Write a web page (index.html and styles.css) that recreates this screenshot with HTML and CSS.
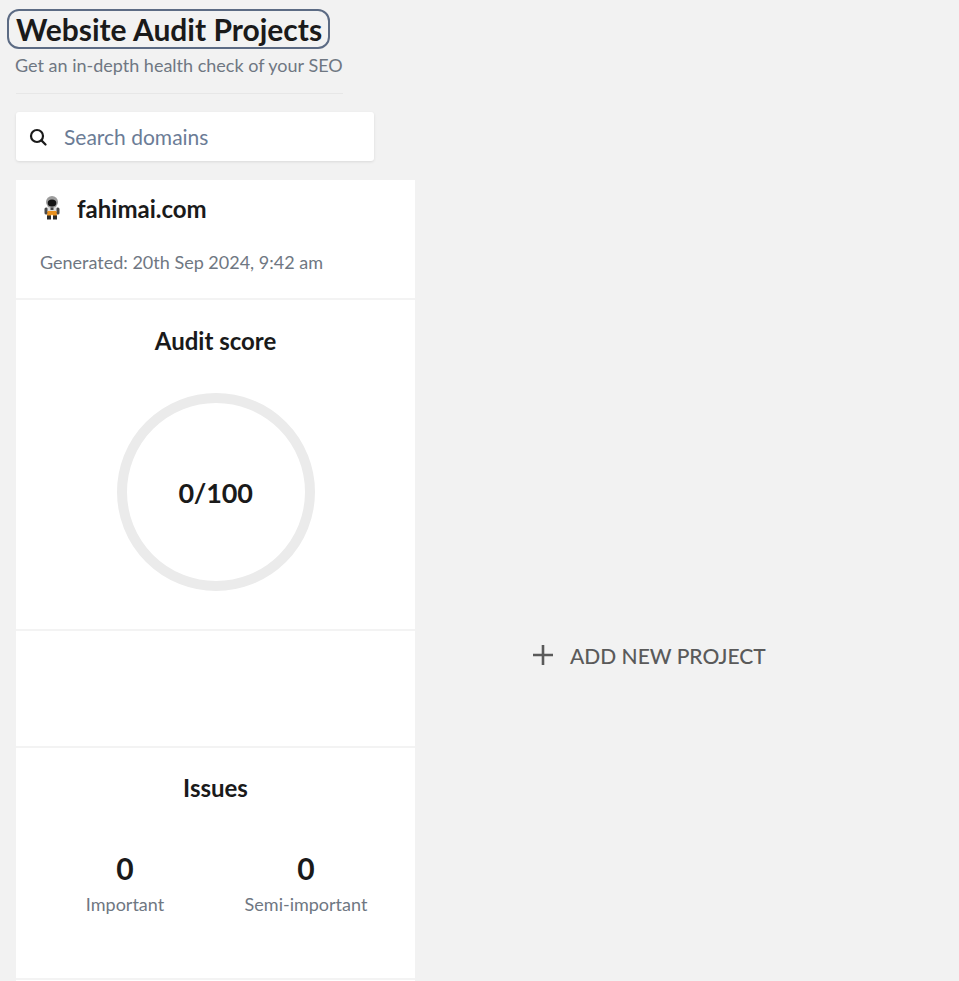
FILE: index.html
```html
<!DOCTYPE html>
<html lang="en">
<head>
<meta charset="utf-8">
<title>Website Audit Projects</title>
<link rel="stylesheet" href="styles.css">
</head>
<body>
<header class="head">
  <h1 class="title">Website Audit Projects</h1>
  <p class="subtitle">Get an in-depth health check of your SEO</p>
</header>
<div class="search">
  <svg class="search-icon" viewBox="0 0 18 18" width="18" height="18" aria-hidden="true"><circle cx="8" cy="8" r="6" fill="none" stroke="#1a1a1a" stroke-width="2.2"/><path d="M12.4 12.4L16.500 16.500" stroke="#1a1a1a" stroke-width="2.2" stroke-linecap="round"/></svg>
  <span class="search-text">Search domains</span>
</div>
<main class="layout">
  <article class="card">
    <section class="sec sec-head">
      <div class="domain">
        <svg class="avatar" viewBox="0 0 18 24" width="18" height="24" aria-hidden="true">
          <rect x="1.500" y="11.500" width="3.500" height="7" rx="1.500" fill="#4a4a4a"/>
          <rect x="13" y="11.500" width="3.500" height="7" rx="1.500" fill="#4a4a4a"/>
          <rect x="4.500" y="10" width="9" height="6" fill="#dcdcdc"/>
          <path d="M4.500 15h9l.5 5h-3.500l-1.500-1.500L7.500 20H4z" fill="#e8901f"/>
          <rect x="4" y="19.500" width="4" height="4" fill="#2b2b2b"/>
          <rect x="10" y="19.500" width="4" height="4" fill="#2b2b2b"/>
          <circle cx="9" cy="6" r="6" fill="#9c9c9c"/>
          <ellipse cx="9" cy="7" rx="4.300" ry="3.500" fill="#141414"/>
          <rect x="7.500" y="11.500" width="3" height="2.500" fill="#444"/>
        </svg>
        <span class="domain-name">fahimai.com</span>
      </div>
      <p class="generated">Generated: 20th Sep 2024, 9:42 am</p>
    </section>
    <section class="sec sec-score">
      <h2 class="sec-title">Audit score</h2>
      <div class="ring"><span class="ring-value">0/100</span></div>
    </section>
    <section class="sec sec-empty"></section>
    <section class="sec sec-issues">
      <h2 class="sec-title">Issues</h2>
      <div class="stats">
        <div class="stat"><span class="stat-value">0</span><span class="stat-label">Important</span></div>
        <div class="stat"><span class="stat-value">0</span><span class="stat-label">Semi-important</span></div>
      </div>
    </section>
    <section class="sec sec-foot"></section>
  </article>
  <div class="add">
    <svg class="plus" viewBox="0 0 22 22" width="22" height="22" aria-hidden="true"><path d="M11 1v20M1 11h20" stroke="#5a5a5a" stroke-width="2.600"/></svg>
    <span class="add-text">ADD NEW PROJECT</span>
  </div>
</main>
</body>
</html>
```
FILE: styles.css
```css
html, body { margin: 0; padding: 0; }
html { overflow: hidden; height: 981px; }
body {
  background: #f2f2f2;
  font-family: Lato, "Liberation Sans", sans-serif;
  color: #1a1a1a;
  padding: 9px 0 0 16px;
}
.head {
  width: 327px;
  padding-bottom: 16px;
  border-bottom: 1px solid #e7e7e7;
}
.title {
  display: inline-block;
  margin: 0 0 0 -9px;
  padding: 0 6px 0 7px;
  border: 2px solid #5c6b84;
  border-radius: 12px;
  font-size: 30px;
  line-height: 36px;
  font-weight: 700;
}
.subtitle {
  margin: 4px 0 0 -1px;
  font-size: 18px;
  line-height: 24px;
  color: #6f7782;
  white-space: nowrap;
}
.search {
  display: flex;
  align-items: center;
  gap: 17px;
  width: 358px;
  height: 49px;
  margin-top: 18px;
  padding-left: 13px;
  box-sizing: border-box;
  background: #fff;
  border-radius: 3px;
  box-shadow: 0 1px 3px rgba(0,0,0,.1);
}
.search-icon { flex: none; }
.search-text { font-size: 21px; color: #6b7c96; }
.layout {
  display: flex;
  align-items: center;
  margin-top: 19px;
}
.card { width: 399px; flex: none; background: #fff; }
.sec { border-bottom: 2px solid #f3f3f3; box-sizing: border-box; }
.sec-head { height: 120px; padding: 12px 0 0 24px; }
.domain { display: flex; align-items: center; gap: 16px; height: 32px; padding-left: 3px; }
.domain-name { font-size: 24px; font-weight: 700; }
.generated { margin: 28px 0 0; font-size: 18px; line-height: 20px; color: #6f7782; }
.sec-score { height: 331px; display: flex; flex-direction: column; align-items: center; padding-top: 26px; }
.sec-title { margin: 0; font-size: 24px; line-height: 30px; font-weight: 700; }
.ring {
  display: flex;
  align-items: center;
  justify-content: center;
  width: 198px;
  height: 198px;
  margin-top: 37px;
  box-sizing: border-box;
  border: 10px solid #ebebeb;
  border-radius: 50%;
}
.ring-value { font-size: 27px; font-weight: 700; letter-spacing: -0.2px; }
.sec-empty { height: 117px; }
.sec-issues { height: 232px; display: flex; flex-direction: column; align-items: center; padding-top: 25px; }
.stats { display: grid; grid-template-columns: 181px 181px; margin-top: 47px; }
.stat { display: flex; flex-direction: column; align-items: center; }
.stat-value { font-size: 30px; line-height: 36px; font-weight: 700; }
.stat-label { font-size: 18px; line-height: 22px; margin-top: 7px; color: #6f7782; }
.sec-foot { height: 150px; border-bottom: 0; }
.add { display: flex; align-items: center; gap: 16px; margin-left: 117px; }
.plus { flex: none; }
.add-text { font-size: 21px; font-weight: 500; color: #5a5a5a; }
```
